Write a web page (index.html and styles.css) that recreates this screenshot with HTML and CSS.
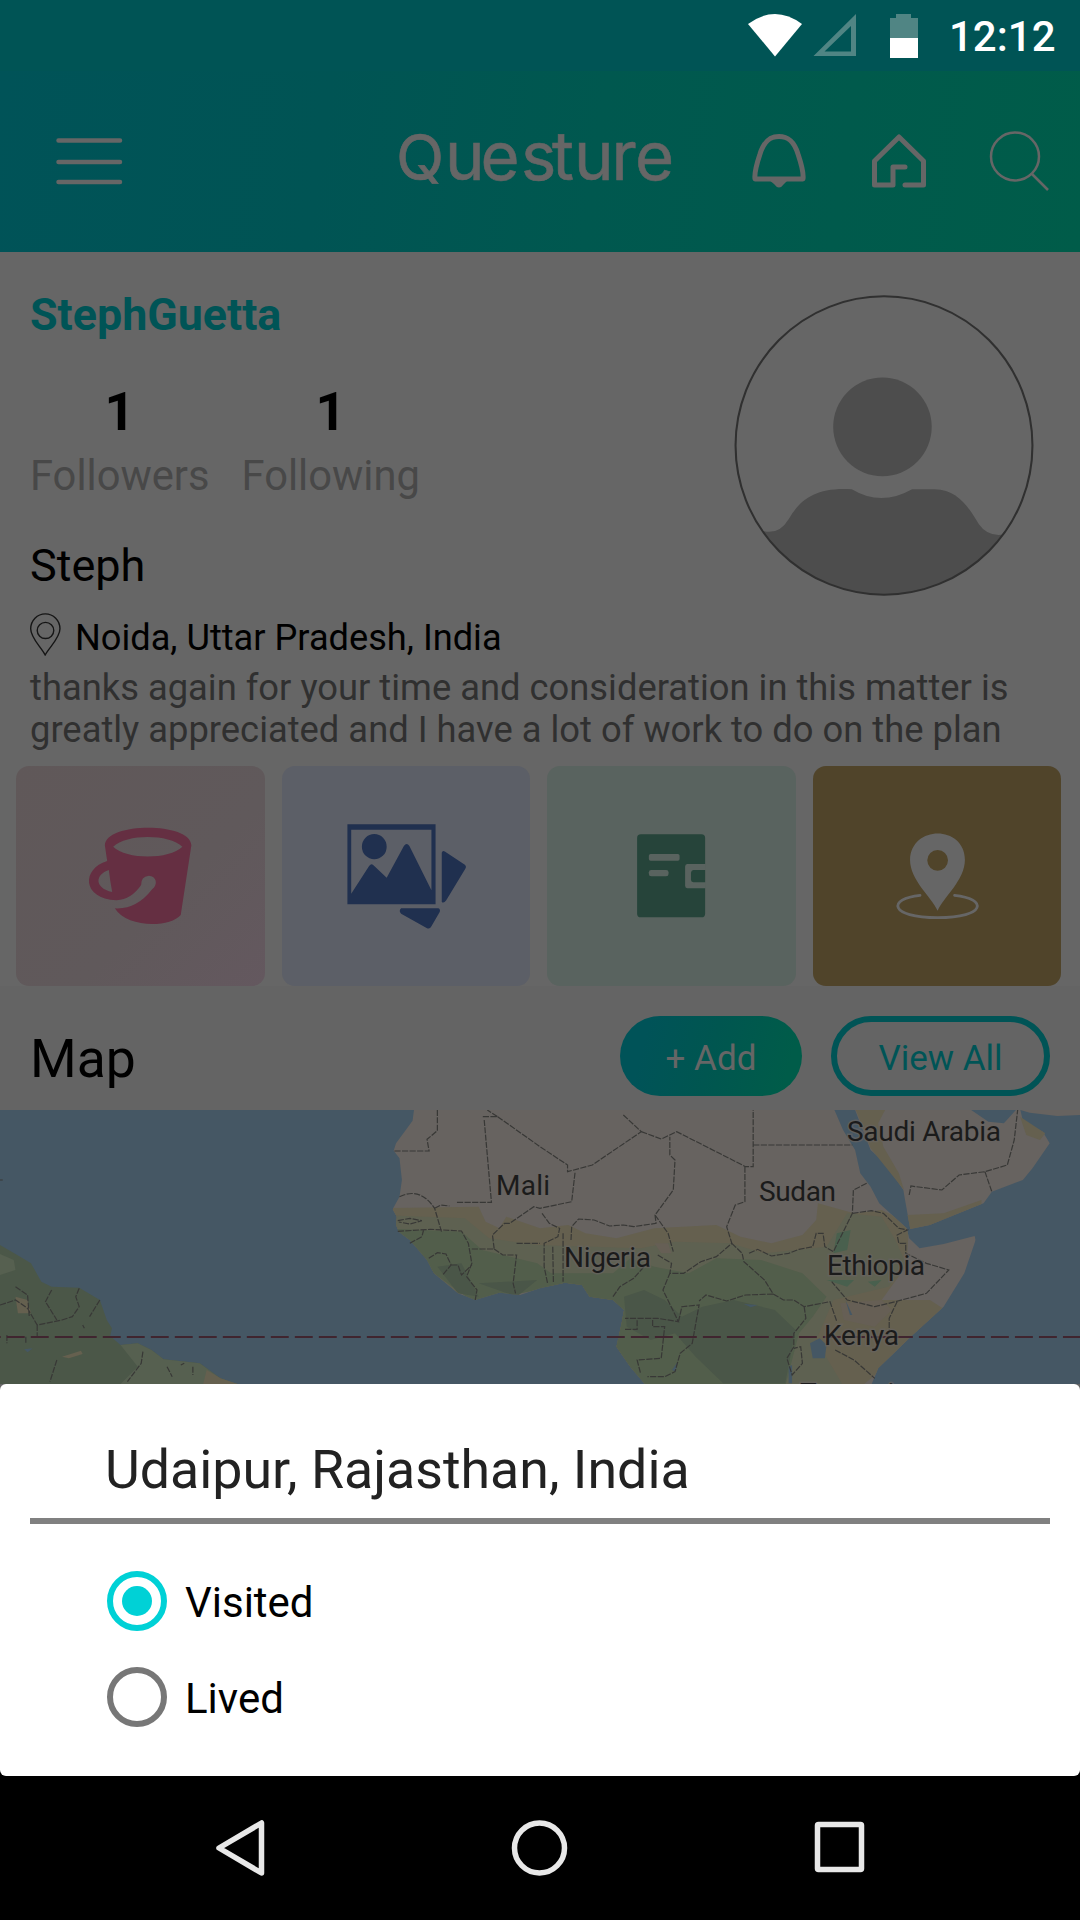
FILE: index.html
```html
<!DOCTYPE html>
<html lang="en">
<head>
<meta charset="utf-8">
<title>Questure</title>
<link rel="stylesheet" href="styles.css">
</head>
<body>
<div class="phone">
  <div class="status">
    <svg class="status-icons" viewBox="748 14 171 45">
      <path fill="#fff" d="M748 24Q775 4 802 24L775 56.500Z"/>
      <path fill="#508584" fill-rule="evenodd" d="M856 14V56H813.500ZM851 26 824.500 51.500H851Z"/>
      <path fill="#508584" d="M896 14h15v4h7v20h-28V18h6z"/>
      <path fill="#fff" d="M890 38h28v20h-28z"/>
    </svg>
    <span class="clock">12:12</span>
  </div>
  <header class="bar">
    <svg class="menu" viewBox="56 137 67 48" stroke="#666" stroke-width="4.500" stroke-linecap="round"><path d="M58.500 140.500H120M58.500 162H120M58.500 182H120"/></svg>
    <svg class="logo" viewBox="390 110 290 90"><text x="396 445 480.500 521 552 574 611.500 635" y="179.500"><tspan class="cap">Q</tspan>uesture</text></svg>
    <svg class="bell" viewBox="750 132 58 58" fill="none" stroke="#666" stroke-width="5" stroke-linejoin="round"><path d="M755 179Q754 172 760 154C764 141 770 136.500 779 136.500S794 141 798 154Q804 172 803 179Z"/><path fill="#666" stroke="none" d="M769 180H788L784 184Q779 191 774 184Z"/></svg>
    <svg class="house" viewBox="870 132 58 58" fill="none" stroke="#666" stroke-width="5" stroke-linejoin="round" stroke-linecap="round"><path d="M905 185H923.500V161L899 137 874.500 161V185H893V167H905"/></svg>
    <svg class="search" viewBox="988 130 62 62" fill="none" stroke="#666" stroke-width="2.500"><circle cx="1015" cy="156.500" r="24"/><path d="M1032 174 1048 190"/></svg>
  </header>

  <section class="profile">
    <div class="info">
      <h1 class="handle">StephGuetta</h1>
      <div class="stats">
        <div class="stat"><b>1</b><span>Followers</span></div>
        <div class="stat"><b>1</b><span>Following</span></div>
      </div>
      <div class="name">Steph</div>
      <div class="place">
        <svg class="pin" viewBox="86 1091 90 128" preserveAspectRatio="none" fill="none" stroke="#151515" stroke-width="4"><path d="M130 1216C118 1192 88 1166 88 1138A42 44 0 0 1 173 1138C173 1166 142 1192 130 1216Z"/><ellipse cx="131" cy="1143" rx="24" ry="24"/></svg>
        <span>Noida, Uttar Pradesh, India</span>
      </div>
    </div>
    <svg class="avatar" viewBox="563 137 871 902" preserveAspectRatio="none">
      <clipPath id="round"><ellipse cx="998.500" cy="588" rx="430" ry="446"/></clipPath>
      <g fill="#4d4d4d"><ellipse cx="994" cy="532" rx="143" ry="148"/>
      <path clip-path="url(#round)" d="M560 845H650Q695 855 722 808C755 750 800 712 905 719Q990 772 1080 719H1145C1215 719 1248 780 1274 824Q1300 862 1345 855H1440V1060H560Z"/></g>
      <ellipse cx="998.500" cy="588" rx="431" ry="447" fill="none" stroke="#303030" stroke-width="6"/>
    </svg>
  </section>
  <p class="bio">thanks again for your time and consideration in this matter is<br>greatly appreciated and I have a lot of work to do on the plan</p>

  <nav class="tiles">
    <svg class="tile pink" viewBox="-192 -163 747 660" preserveAspectRatio="none">
      <path fill="#652f42" fill-rule="evenodd" d="M75 75C78 5 332 5 335 75L303 284C270 323 140 323 105 264Q170 268 217 207C236 192 230 167 207 166Q183 169 184 194Q155 237 110 240C5 235 5 145 82 122ZM100 79C140 118 268 118 308 79C268 40 140 40 100 79ZM87 149C45 163 43 203 97 215L91 180Z"/>
    </svg>
    <svg class="tile blue" viewBox="820 47 722 660" preserveAspectRatio="none">
      <g fill="#20304f"><path fill-rule="evenodd" d="M1010 222H1266V462H1010ZM1021 238V430L1073 347Q1080 337 1088 347L1124 382 1174 287Q1182 275 1190 287L1254 420V238Z"/><ellipse cx="1088" cy="289" rx="36" ry="38"/><path d="M1284 307Q1286 299 1294 304L1351 343Q1357 348 1352 356L1297 450Q1290 460 1284 455ZM1166 474H1274Q1281 477 1278 485L1254 528Q1249 538 1240 533L1166 490Q1158 482 1166 474Z"/></g>
    </svg>
    <svg class="tile green" viewBox="24 47 720 660" preserveAspectRatio="none">
      <rect x="285" y="252" width="197" height="249" rx="11" fill="#26443a"/>
      <g fill="#59635f"><rect x="319" y="311" width="89" height="20" rx="5"/><rect x="319" y="359" width="57" height="19" rx="7"/><path d="M430 341H484V414H430Q424 413 424 406V349Q424 342 430 341Z"/></g>
      <path fill="#26443a" d="M448 359H482V396H448Q441 395 441 388V367Q442 360 448 359Z"/>
    </svg>
    <svg class="tile gold" viewBox="796 47 720 660" preserveAspectRatio="none">
      <path fill="#666" fill-rule="evenodd" d="M1157 481C1140 440 1077 390 1077 328C1080 223 1235 223 1236 328C1236 390 1174 440 1157 481ZM1157 299A30 31 0 1 0 1157 361A30 31 0 1 0 1157 299Z"/>
      <path fill="none" stroke="#666" stroke-width="8" stroke-linecap="round" d="M1106 435C1012 445 1015 502 1157 502S1302 445 1206 435"/>
    </svg>
  </nav>

  <div class="maphead"><h2>Map</h2><span class="add">+ Add</span><span class="view">View All</span></div>

  <div class="map">
    <svg class="terrain" viewBox="0 30 3136 822" preserveAspectRatio="none">
      <clipPath id="africa"><path d="M1202 30 1198 62 1150 130 1143 152 1160 175 1167 240 1160 290 1140 328 1152 350 1150 375 1158 395 1190 420 1240 480 1260 520 1330 580 1380 600 1450 578 1510 585 1568 565 1640 548 1690 555 1712 590 1780 600 1812 630 1805 670 1790 740 1830 800 1875 855H2530L2550 805 2600 755 2640 715 2740 620 2800 520 2833 420 2830 408 2740 432 2670 445 2640 415 2633 385 2553 310 2528 260 2498 220 2483 150 2448 90 2423 30Z"/></clipPath>
      <g clip-path="url(#africa)">
        <path fill="#676360" d="M1100 30H2900V860H1100Z"/>
        <path fill="#65604f" d="M1100 325 1390 320 1410 365 1450 385 1470 350 1568 385 1650 375 1700 400 1790 415 1900 385 2080 375 2150 410 2240 430 2330 405 2370 360 2375 310 2480 340 2560 330 2640 370 2635 450 2630 500 2560 600 2700 600 2760 640 2500 860H1750L1600 560 1100 400Z"/>
        <path fill="#5e6151" d="M1100 345 1350 355 1420 415 1560 435 1720 440 1860 445 1960 425 2120 430 2220 460 2400 440 2460 340 2560 350 2600 420 2630 490 2580 560 2420 600 2370 720 2450 860H1750L1600 560 1100 600Z"/>
        <path fill="#525e4b" d="M1100 385 1340 395 1400 450 1560 490 1600 520 1780 520 1830 475 1900 500 2000 520 2080 475 2210 480 2330 520 2400 590 2360 650 2320 700 2280 860H1800L1600 560 1380 610 1100 400Z"/>
        <path fill="#4a5648" d="M1812 590 1870 570 1930 600 1980 650 2040 620 2130 600 2250 630 2310 690 2280 850H2100L2020 770 1960 700 1890 720 1820 680ZM1270 500 1340 490 1390 590 1330 580ZM1390 550 1560 540 1500 590Z"/>
        <path fill="#49604e" d="M2430 400 2470 390 2460 450 2420 460ZM2400 540 2480 540 2460 560ZM2520 545 2560 540 2540 560Z"/>
        <path fill="#665f55" d="M2440 610 2560 600 2590 630 2540 680 2450 660ZM1900 430 1940 430 1950 460 1920 460Z"/>
      </g>
      <path fill="#676360" d="M2483 30 2528 150 2570 190 2623 270 2628 300 2643 387 2700 375 2856 310 2880 275 2970 240 2998 205 3048 130 3028 95 2970 62 2963 30Z"/>
      <path fill="#65604f" d="M2485 30H2570L2550 70 2565 140 2610 220 2625 270 2528 145ZM2962 50 3035 100 3020 120 2980 105ZM2635 345 2740 340 2850 300 2850 312 2700 375 2643 387Z"/>
      <path fill="#455764" d="M2820 30 2870 65 2915 70 2950 30Z"/>
      <path fill="#676360" d="M2963 30H3136V45L3070 48 2990 38Z"/>
      <path fill="#4b5748" d="M0 435 50 465 90 490 120 545 150 560 230 563 290 600 310 660 325 685 320 708 350 735 400 730 440 750 475 778 580 790 640 835 695 855H0Z"/>
      <path fill="#566050" d="M0 462 40 480 45 510 0 525ZM350 735 400 730 440 750 475 778 580 790 640 835 690 852H350L400 800Z"/>
      <path fill="#65604f" d="M590 852 600 810 640 835 690 852ZM45 590 80 600 90 640 52 640ZM180 770 235 752 240 762 200 775Z"/>
      <path fill="#455764" d="M2352 730 2380 715 2400 735 2395 775 2360 775ZM1951 810 1968 785 1962 815ZM2455 600 2475 645 2468 645ZM2160 612 2200 615 2180 622ZM2290 800 2300 795 2300 850 2290 850ZM70 748 95 745 80 757Z"/>
      <g class="borders">
        <path d="M1270 30V92L1240 118 1246 153H1143M1402 50H1445L1415 30M1445 50 1568 140 1648 195V215L1720 195 1862 95 1810 45M1406 60 1427 307H1325M1160 290Q1220 260 1262 325L1282 395M1262 325 1280 315 1305 318M1155 362 1190 355 1225 362 1190 372 1158 366M1155 394 1250 388 1340 393 1360 430 1370 490 1355 530 1385 570 1380 600M1245 475 1270 458 1295 462 1310 495 1285 525M1310 495 1330 495 1340 525 1370 495M1190 430 1225 410 1230 390M1370 447 1435 447 1430 405 1465 370 1480 370 1550 320 1568 325 1660 305 1670 215M1435 447 1460 465 1500 465 1490 550 1497 580M1500 430H1568M1574 340 1595 370 1625 385 1620 410 1580 430 1580 500 1590 550M1605 440 1607 550M1635 400 1635 545M1658 420 1660 380 1680 357 1725 360 1770 378 1810 375 1840 380 1905 370 1902 345 1955 270 1960 180 1945 165V110M1862 95 1920 117 1965 95 2165 200H2187V30M2187 135H2475M2163 200V305L2135 315 2110 380 2125 430 2080 470 2035 485 1985 520H1945L1925 570 1970 665 1910 655H1815M1902 345 1940 400 1955 455M1910 465 1950 490 1945 520M1780 590 1800 560 1840 535 1870 500M2125 430 2155 460 2160 485 2220 540 2245 582 2165 585 2110 603 2050 585 2030 603M2175 460 2200 448 2240 468 2290 460 2320 448 2360 440 2370 400H2390L2395 440 2420 455 2475 340 2478 270 2520 248M2475 340 2530 332 2565 340 2610 385 2635 390 2605 405 2610 430 2630 430 2630 460 2690 490 2755 510 2690 580 2600 605 2540 620 2460 600 2415 545M2245 582 2275 600 2305 600 2335 620 2410 605 2430 665M2335 620 2340 655 2305 700V740L2285 775 2300 825 2330 790 2325 740 2305 745M2605 605 2582 655V700M2425 750 2480 780 2540 835M1970 665 1980 620 2030 615 2010 730 1975 760 1960 815 1930 830H1880M1815 688H1850V660M1895 660V680H1930L1920 775 1850 780 1860 820"/>
        <path d="M2640 285 2645 258 2735 270 2785 225 2860 215 2925 195 2945 120 2955 30M2860 215 2880 275M0 615 45 600 80 625 108 675 180 660 210 650 230 620 220 590 230 565M150 570 132 605 165 660M290 600 260 650M108 675V710M45 560 80 585 85 650M165 780 145 845M415 755 410 790 370 845M240 675 245 685M0 240H8M525 795 535 790M560 800V825M485 800 500 830M20 705V730M75 710V730"/>
      </g>
      <path d="M-50 711H3136" fill="none" stroke="#40252f" stroke-width="6" stroke-dasharray="52 17.700" />
    </svg>
    <svg class="labels" viewBox="0 1110 1080 274">
      <text x="847" y="1141" textLength="154">Saudi Arabia</text>
      <text x="496" y="1195" textLength="54">Mali</text>
      <text x="759" y="1201" textLength="77">Sudan</text>
      <text x="564" y="1267" textLength="87">Nigeria</text>
      <text x="827" y="1275" textLength="98">Ethiopia</text>
      <text x="824" y="1345" textLength="75">Kenya</text>
      <text x="800" y="1403" textLength="109">Tanzania</text>
    </svg>
  </div>

  <section class="sheet">
    <div class="city">Udaipur, Rajasthan, India</div>
    <div class="option"><span class="radio on"></span><span class="label">Visited</span></div>
    <div class="option"><span class="radio"></span><span class="label">Lived</span></div>
  </section>

  <footer class="nav">
    <svg viewBox="214 1818 652 60" fill="none" stroke="#e8e8e8" stroke-width="5.500" stroke-linejoin="round">
      <path d="M219 1848 261.500 1823V1873Z"/><circle cx="539.500" cy="1848" r="25"/><rect x="817.500" y="1824.500" width="44" height="45" rx="1"/>
    </svg>
  </footer>
</div>
</body>
</html>
```
FILE: styles.css
```css
* { box-sizing: border-box; }
body { margin: 0; background: #000; }
svg { display: block; flex: none; }
.phone { width: 1080px; height: 1920px; background: #666; font-family: Roboto, sans-serif; color: #000; display: flex; flex-direction: column; overflow: hidden; }

.status { height: 71px; background: #005455; display: flex; justify-content: flex-end; align-items: flex-start; padding: 14px 24px 0 0; flex: none; }
.status-icons { width: 171px; height: 45px; }
.clock { color: #fff; font-size: 42px; font-weight: 500; line-height: 46px; margin-left: 30px; width: 107px; white-space: nowrap; }

.bar { height: 181px; flex: none; background: linear-gradient(98deg, #005358 0%, #005454 30%, #00584f 55%, #005c49 100%); display: flex; align-items: flex-start; padding: 39px 30px 0 56px; }
.menu { width: 67px; height: 48px; margin-top: 27px; }
.logo { width: 290px; height: 90px; margin-left: 267px; }
.logo text { font-family: Inter, sans-serif; font-size: 67px; fill: #666; stroke: #666; stroke-width: .6px; }
.logo .cap { font-size: 63px; }
.bell { width: 58px; height: 58px; margin: 22px 0 0 70px; }
.house { width: 58px; height: 58px; margin: 22px 0 0 62px; }
.search { width: 62px; height: 62px; margin: 20px 0 0 60px; }

.profile { display: flex; justify-content: space-between; height: 415px; padding: 0 46px 0 30px; flex: none; }
.avatar { width: 300px; height: 301px; margin-top: 43px; }
.handle { margin: 36px 0 0; font-size: 44.800px; line-height: 54px; font-weight: 700; color: #005456; }
.stats { display: flex; gap: 32px; margin-top: 39px; }
.stat { display: flex; flex-direction: column; align-items: center; }
.stat b { font-size: 53px; line-height: 62px; }
.stat span { font-size: 41.700px; line-height: 50px; color: #484848; margin-top: 8px; }
.name { font-size: 45px; line-height: 54px; margin-top: 38px; }
.place { display: flex; align-items: flex-start; margin-top: 20px; height: 46px; font-size: 36.200px; line-height: 44px; white-space: nowrap; }
.pin { width: 31px; height: 43px; }
.place span { margin: 3px 0 0 14px; }
.bio { margin: 0; padding: 0 30px; height: 99px; font-size: 36.350px; line-height: 42px; color: #303030; white-space: nowrap; flex: none; }

.tiles { display: flex; gap: 17px; padding: 0 18px 0 16px; flex: none; }
.tile { width: 248.600px; height: 220px; border-radius: 13px; }
.pink { background: linear-gradient(135deg, #605859, #60595b 60%, #64585f); }
.blue { background: #5c5f67; }
.green { background: #59635f; }
.gold { background: #50442a; }

.maphead { display: flex; height: 124px; padding: 30px 30px 0; background: #646464; align-items: flex-start; flex: none; }
.maphead h2 { font-size: 53.500px; line-height: 64px; margin: 11px auto 0 0; font-weight: 400; }
.add, .view { height: 80px; border-radius: 40px; font-size: 35px; text-align: center; }
.add { width: 182px; line-height: 86px; color: #666; background: linear-gradient(105deg, #005358 15%, #005650 50%, #005c49 90%); }
.view { width: 219px; line-height: 74px; margin-left: 29px; border: 6px solid #005456; color: #005456; }

.map { height: 274px; position: relative; background: #455764; overflow: hidden; flex: none; }
.terrain, .labels { position: absolute; left: 0; top: 0; width: 1080px; height: 274px; }
.borders { fill: none; stroke: #383836; stroke-width: 3.500; stroke-dasharray: 18 4; }
.labels text { font-size: 28px; fill: #1b1b1b; stroke: #676360; stroke-opacity: .7; stroke-width: 3px; paint-order: stroke; }

.sheet { height: 392px; background: #fff; border-radius: 6px; padding: 48px 30px 0; box-shadow: 0 6px 0 #000; flex: none; }
.city { height: 92px; border-bottom: 6px solid #808080; padding-left: 75px; font-size: 53.700px; line-height: 75px; color: #222; }
.option { display: flex; align-items: center; gap: 18px; height: 60px; margin: 47px 0 0 77px; font-size: 42px; }
.option + .option { margin-top: 36px; }
.label { padding-top: 3px; }
.radio { width: 60px; height: 60px; border: 6px solid #777; border-radius: 50%; display: grid; place-items: center; }
.radio.on { border-color: #00d1d6; }
.radio.on::after { content: ""; width: 30px; height: 30px; border-radius: 50%; background: #00d1d6; }
.nav { flex: 1; background: #000; padding: 42px 0 0 214px; }
.nav svg { width: 652px; height: 60px; }
```
